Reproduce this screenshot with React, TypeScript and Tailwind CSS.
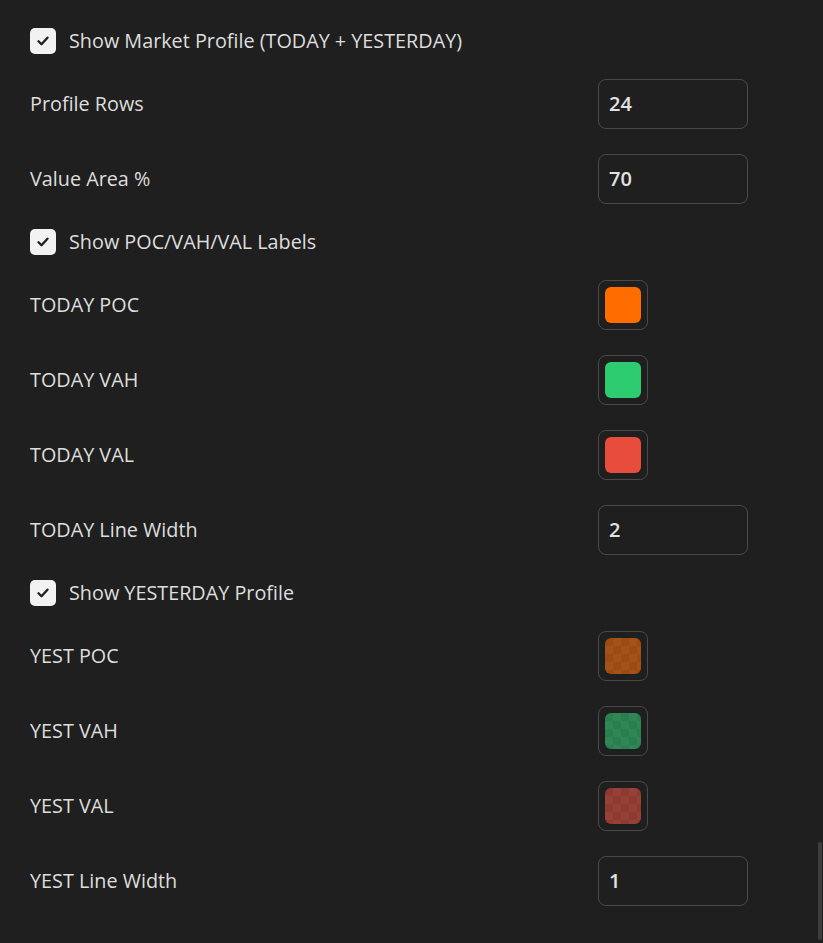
const Check = ({ label }: { label: string }) => (
  <div className="flex h-[26px] items-center gap-[13px]">
    <div className="flex h-[26px] w-[26px] items-center justify-center rounded-[5px] bg-[#f2f2f2]">
      <svg width="16" height="16" viewBox="0 0 16 16" fill="none">
        <path d="M3.5 8.3l3 3 6-6.6" stroke="#1e1e1e" strokeWidth="2.3" strokeLinecap="round" strokeLinejoin="round" />
      </svg>
    </div>
    <span>{label}</span>
  </div>
);

const NumberRow = ({ label, value }: { label: string; value: string }) => (
  <div className="flex h-[50px] items-center justify-between">
    <span>{label}</span>
    <div className="mr-[75px] flex h-[50px] w-[150px] items-center rounded-[8px] border border-[#4a4a4a] px-[10px] text-[20px] font-semibold text-[#e2e2e2]">
      {value}
    </div>
  </div>
);

const ColorRow = ({
  label,
  color,
  faded,
}: {
  label: string;
  color: string;
  faded?: boolean;
}) => (
  <div className="flex h-[50px] items-center justify-between">
    <span>{label}</span>
    <div className="mr-[175px] flex h-[50px] w-[50px] items-center justify-center rounded-[8px] border border-[#4a4a4a]">
      {faded ? (
        <div className="relative h-[36px] w-[36px] overflow-hidden rounded-[6px] bg-[repeating-conic-gradient(#333333_0%_25%,#242424_0%_50%)] bg-[length:16px_16px]">
          <div className={`absolute inset-0 ${color}`} />
        </div>
      ) : (
        <div className={`h-[36px] w-[36px] rounded-[6px] ${color}`} />
      )}
    </div>
  </div>
);

export default function App() {
  return (
    <div className="relative min-h-[943px] w-full bg-[#1f1f1f] font-['Open_Sans',sans-serif] text-[19.8px] font-medium text-[#dedede]">
      <div className="flex flex-col gap-[25px] pl-[30px] pt-[28px]">
        <Check label="Show Market Profile (TODAY + YESTERDAY)" />
        <NumberRow label="Profile Rows" value="24" />
        <NumberRow label="Value Area %" value="70" />
        <Check label="Show POC/VAH/VAL Labels" />
        <ColorRow label="TODAY POC" color="bg-[#ff6d00]" />
        <ColorRow label="TODAY VAH" color="bg-[#2ecc71]" />
        <ColorRow label="TODAY VAL" color="bg-[#e74c3c]" />
        <NumberRow label="TODAY Line Width" value="2" />
        <Check label="Show YESTERDAY Profile" />
        <ColorRow label="YEST POC" color="bg-[#ff6d00]/55" faded />
        <ColorRow label="YEST VAH" color="bg-[#2ecc71]/55" faded />
        <ColorRow label="YEST VAL" color="bg-[#e74c3c]/55" faded />
        <NumberRow label="YEST Line Width" value="1" />
      </div>
      <div className="absolute right-[1px] top-[842px] h-[98px] w-[4px] rounded-full bg-[#3d3d3d]" />
    </div>
  );
}
